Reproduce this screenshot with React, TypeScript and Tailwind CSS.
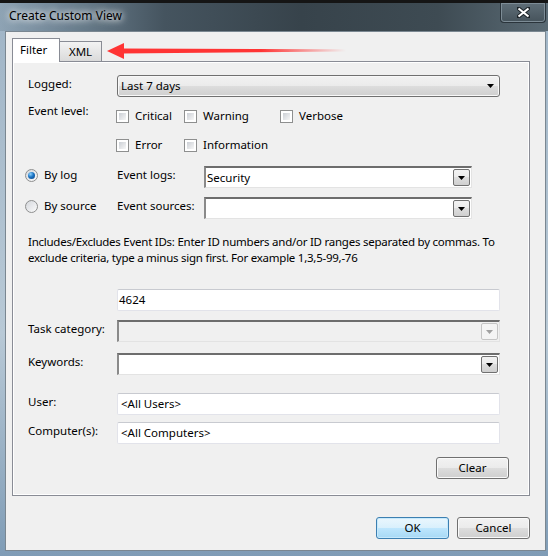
import React from 'react';

const font = "font-['Segoe_UI','Noto_Sans',sans-serif] text-[11.5px] text-black";

const btnBg =
  'bg-[linear-gradient(to_bottom,#f2f2f2_0%,#ebebeb_49%,#dddddd_50%,#cfcfcf_100%)]';

const Arrow: React.FC<{ disabled?: boolean }> = ({ disabled }) => (
  <svg width="7" height="4" viewBox="0 0 7 4">
    <path d="M0 0h7L3.5 4z" fill={disabled ? '#a0a0a0' : '#000'} />
  </svg>
);

const Checkbox: React.FC<{ label: string }> = ({ label }) => (
  <label className="flex items-center gap-[6px]">
    <span className="w-[13px] h-[13px] border border-[#8e8f8f] bg-white p-[2px] flex">
      <span className="flex-1 bg-[linear-gradient(135deg,#cbcfd5,#f7f7f7)]" />
    </span>
    <span>{label}</span>
  </label>
);

const Radio: React.FC<{ label: string; checked?: boolean }> = ({ label, checked }) => (
  <label className="flex items-center gap-[6px] h-[16px]">
    <span className="w-[13px] h-[13px] rounded-full border border-[#8e8f8f] bg-[linear-gradient(135deg,#d4d7dc,#fbfbfb)] flex items-center justify-center">
      {checked && (
        <span className="w-[7px] h-[7px] rounded-full bg-[radial-gradient(circle_at_35%_30%,#8fd3ff_0%,#1a74c4_45%,#0b3f7f_100%)]" />
      )}
    </span>
    <span>{label}</span>
  </label>
);

const Combo: React.FC<{ value?: string; width: string; disabled?: boolean }> = ({
  value,
  width,
  disabled,
}) => (
  <div
    className={`${width} h-[22px] flex items-center border-t-2 border-l-2 border-t-[#6d6d6d] border-l-[#8a8a8a] border-b border-r border-b-[#e3e3e3] border-r-[#e3e3e3] ${
      disabled ? 'bg-[#f0f0f0]' : 'bg-white'
    }`}
  >
    <span className="flex-1 pl-[1px] truncate">{value}</span>
    <span
      className={`w-[17px] h-[17px] mr-[1px] rounded-[2px] border flex items-center justify-center ${
        disabled ? 'border-[#c5c5c5] bg-[#f4f4f4]' : `border-[#707070] ${btnBg}`
      }`}
    >
      <Arrow disabled={disabled} />
    </span>
  </div>
);

const TextBox: React.FC<{ value: string; pl?: string }> = ({ value, pl = 'pl-[3px]' }) => (
  <div
    className={`w-[383px] h-[22px] flex items-center ${pl} bg-white rounded-[2px] border border-[#e2e3ea] border-t-[#c8cad0]`}
  >
    {value}
  </div>
);

const Button: React.FC<{ children: React.ReactNode; primary?: boolean }> = ({
  children,
  primary,
}) => (
  <button
    className={`w-[73px] h-[22px] rounded-[3px] border flex items-center justify-center ${
      primary
        ? 'border-[#3c7fb1] bg-[linear-gradient(to_bottom,#eaf6fd_0%,#d9f0fc_49%,#bee6fd_50%,#a7d9f5_100%)] shadow-[inset_0_0_0_1px_#c6e9fc]'
        : `border-[#707070] ${btnBg} shadow-[inset_0_0_0_1px_#fafafa]`
    }`}
  >
    {children}
  </button>
);

const Row: React.FC<{ label: string; className?: string; children: React.ReactNode }> = ({
  label,
  className = '',
  children,
}) => (
  <div className={`flex items-start ${className}`}>
    <span className="w-[89px] leading-[16px] pt-[1px]">{label}</span>
    {children}
  </div>
);

const App: React.FC = () => {
  return (
    <div
      className={`${font} relative w-[548px] h-[556px] overflow-hidden flex flex-col bg-[linear-gradient(to_bottom,#9fb4c6_0%,#b8c9d6_60%,#7f9cb6_100%)]`}
    >
      {/* title bar */}
      <div className="h-[31px] border-t-[3px] border-[#151515] flex justify-between bg-[linear-gradient(to_right,#8ea3b4_0%,#6e8393_12%,#45545f_30%,#37434b_55%,#3e4b53_80%,#5a6a74_100%)]">
        <span className="pl-[9px] pt-[5px] leading-[16px] text-[12px] [text-shadow:0_0_6px_#ffffff,0_0_10px_#ffffff]">
          Create Custom View
        </span>
        <div className="w-[46px] h-[20px] mr-[2px] rounded-b-[4px] border border-t-0 border-[#2a343b] shadow-[inset_0_0_0_1px_#7d8c96] bg-[linear-gradient(to_bottom,#5f6e78,#46535b)] flex items-center justify-center">
          <svg width="13" height="11" viewBox="0 0 13 11">
            <path
              d="M1 1l11 9M12 1L1 10"
              stroke="#1c2328"
              strokeWidth="4"
              strokeLinecap="square"
            />
            <path d="M1.5 1.5l10 8M11.5 1.5l-10 8" stroke="#fff" strokeWidth="2.2" />
          </svg>
        </div>
      </div>

      {/* client area */}
      <div className="flex-1 flex pl-[5px] pr-[2px] pb-[5px]">
        <div className="flex-1 bg-[#f0f0f0] border border-[#7a8791] pl-[6px] pt-[6px] flex flex-col">
          {/* tabs */}
          <div className="flex items-end h-[23px]">
            <div className="w-[48px] h-[24px] bg-white border border-b-0 border-[#898c95] -mb-px relative z-10 pl-[7px] pt-[3px] leading-[16px]">
              Filter
            </div>
            <div className="w-[42px] h-[20px] border border-l-0 border-b-0 border-[#898c95] bg-[linear-gradient(to_bottom,#f3f3f3,#dadada)] flex items-center justify-center">
              XML
            </div>
          </div>

          {/* panel */}
          <div className="w-[518px] h-[435px] border border-[#898c95] bg-[#f0f0f0] shadow-[inset_1px_1px_0_#ffffff,inset_-1px_-1px_0_#ffffff] pl-[15px] pt-[13px] flex flex-col">
            <Row label="Logged:">
              <div
                className={`w-[383px] h-[22px] rounded-[3px] border border-[#707070] ${btnBg} shadow-[inset_0_0_0_1px_#f8f8f8] flex items-center justify-between pl-[3px] pr-[5px]`}
              >
                <span>Last 7 days</span>
                <Arrow />
              </div>
            </Row>

            <div className="flex items-start mt-[6px]">
              <span className="w-[89px] leading-[16px]">Event level:</span>
              <div className="flex flex-col gap-[11px] pt-[4px] -ml-[1px]">
                <div className="flex h-[18px] items-center">
                  <div className="w-[68px]">
                    <Checkbox label="Critical" />
                  </div>
                  <div className="w-[96px]">
                    <Checkbox label="Warning" />
                  </div>
                  <Checkbox label="Verbose" />
                </div>
                <div className="flex h-[18px] items-center">
                  <div className="w-[68px]">
                    <Checkbox label="Error" />
                  </div>
                  <Checkbox label="Information" />
                </div>
              </div>
            </div>

            <div className="flex items-start mt-[12px] -ml-[3px]">
              <div className="w-[92px] pt-[1px]">
                <Radio label="By log" checked />
              </div>
              <span className="w-[87px] leading-[16px] pt-[1px]">Event logs:</span>
              <Combo value="Security" width="w-[268px]" />
            </div>

            <div className="flex items-start mt-[9px] -ml-[3px]">
              <div className="w-[92px] pt-[1px]">
                <Radio label="By source" />
              </div>
              <span className="w-[87px] leading-[16px] pt-[1px]">Event sources:</span>
              <Combo width="w-[268px]" />
            </div>

            <p className="mt-[15px] leading-[16px] whitespace-nowrap tracking-[-0.25px]">
              Includes/Excludes Event IDs: Enter ID numbers and/or ID ranges separated by commas. To
              <br />
              exclude criteria, type a minus sign first. For example 1,3,5-99,-76
            </p>

            <div className="flex mt-[23px] pl-[89px]">
              <TextBox value="4624" pl="pl-[1px]" />
            </div>

            <Row label="Task category:" className="mt-[9px]">
              <Combo width="w-[383px]" disabled />
            </Row>

            <Row label="Keywords:" className="mt-[11px]">
              <Combo width="w-[383px]" />
            </Row>

            <Row label="User:" className="mt-[18px]">
              <TextBox value="<All Users>" />
            </Row>

            <Row label="Computer(s):" className="mt-[7px]">
              <TextBox value="<All Computers>" />
            </Row>

            <div className="flex mt-[13px] pl-[408px]">
              <Button>Clear</Button>
            </div>
          </div>

          {/* footer buttons */}
          <div className="w-[518px] flex justify-end gap-[8px] mt-[21px]">
            <Button primary>OK</Button>
            <Button>Cancel</Button>
          </div>
        </div>
      </div>

      {/* red annotation arrow pointing at the XML tab */}
      <svg
        className="absolute left-[104px] top-[40px] pointer-events-none"
        width="246"
        height="22"
        viewBox="0 0 246 22"
      >
        <defs>
          <linearGradient id="fade" x1="0" x2="1" y1="0" y2="0">
            <stop offset="0" stopColor="#ff3434" />
            <stop offset="0.62" stopColor="#ff3434" />
            <stop offset="1" stopColor="#ff3434" stopOpacity="0" />
          </linearGradient>
        </defs>
        <path d="M3 11L20 3v16z" fill="#ff3434" />
        <path d="M18 8.5L242 9.3v2.2L18 13.6z" fill="url(#fade)" />
      </svg>
    </div>
  );
};

export default App;
